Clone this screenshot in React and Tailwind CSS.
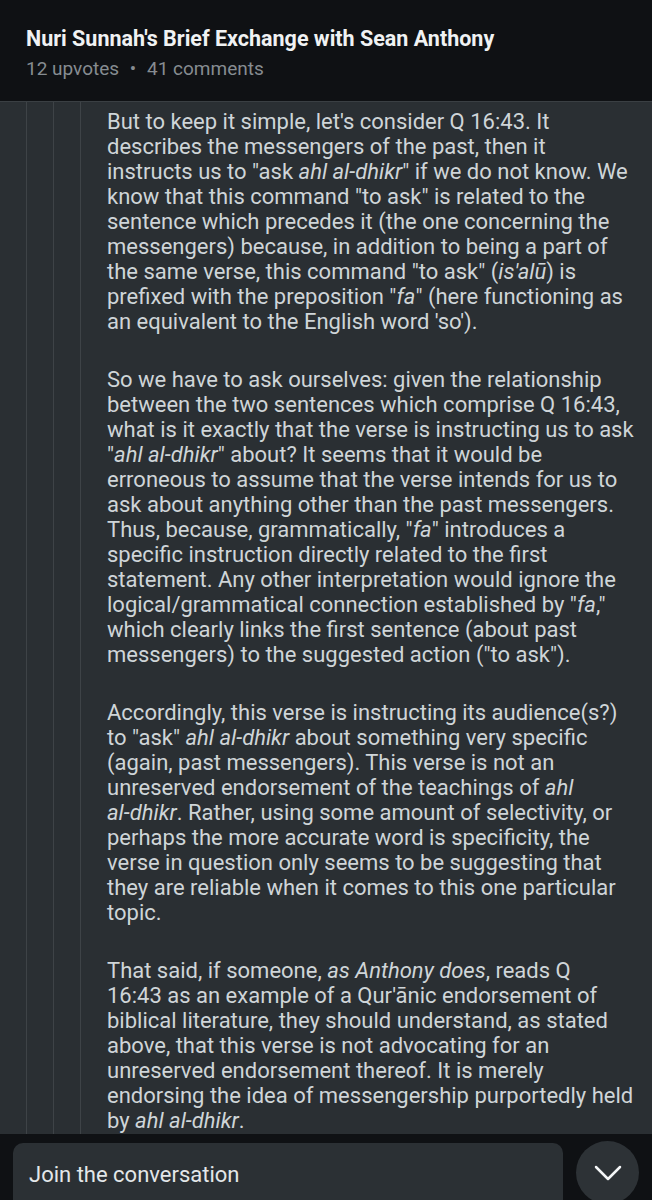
const paragraphs = [
  [
    <>But to keep it simple, let's consider Q 16:43. It</>,
    <>describes the messengers of the past, then it</>,
    <>
      instructs us to "ask <i>ahl al-dhikr</i>" if we do not know. We
    </>,
    <>know that this command "to ask" is related to the</>,
    <>sentence which precedes it (the one concerning the</>,
    <>messengers) because, in addition to being a part of</>,
    <>
      the same verse, this command "to ask" (<i>is'alū</i>) is
    </>,
    <>
      prefixed with the preposition "<i>fa</i>" (here functioning as
    </>,
    <>an equivalent to the English word 'so').</>,
  ],
  [
    <>So we have to ask ourselves: given the relationship</>,
    <>between the two sentences which comprise Q 16:43,</>,
    <>what is it exactly that the verse is instructing us to ask</>,
    <>
      "<i>ahl al-dhikr</i>" about? It seems that it would be
    </>,
    <>erroneous to assume that the verse intends for us to</>,
    <>ask about anything other than the past messengers.</>,
    <>
      Thus, because, grammatically, "<i>fa</i>" introduces a
    </>,
    <>specific instruction directly related to the first</>,
    <>statement. Any other interpretation would ignore the</>,
    <>
      logical/grammatical connection established by "<i>fa</i>,"
    </>,
    <>which clearly links the first sentence (about past</>,
    <>messengers) to the suggested action ("to ask").</>,
  ],
  [
    <>Accordingly, this verse is instructing its audience(s?)</>,
    <>
      to "ask" <i>ahl al-dhikr</i> about something very specific
    </>,
    <>(again, past messengers). This verse is not an</>,
    <>
      unreserved endorsement of the teachings of <i>ahl</i>
    </>,
    <>
      <i>al-dhikr</i>. Rather, using some amount of selectivity, or
    </>,
    <>perhaps the more accurate word is specificity, the</>,
    <>verse in question only seems to be suggesting that</>,
    <>they are reliable when it comes to this one particular</>,
    <>topic.</>,
  ],
  [
    <>
      That said, if someone, <i>as Anthony does</i>, reads Q
    </>,
    <>16:43 as an example of a Qur'ānic endorsement of</>,
    <>biblical literature, they should understand, as stated</>,
    <>above, that this verse is not advocating for an</>,
    <>unreserved endorsement thereof. It is merely</>,
    <>endorsing the idea of messengership purportedly held</>,
    <>
      by <i>ahl al-dhikr</i>.
    </>,
  ],
];

export default function App() {
  return (
    <div
      className="h-[1200px] w-[652px] flex flex-col overflow-hidden bg-[#2a2f33]"
      style={{ fontFamily: "Roboto, 'Noto Sans', sans-serif" }}
    >
      <header className="h-[102px] shrink-0 bg-[#0f1114] px-[26px] pt-[26px] border-b border-[#3a3f43]">
        <h1 className="text-[21.5px] leading-[26px] font-bold text-[#f0f2f3]">
          Nuri Sunnah's Brief Exchange with Sean Anthony
        </h1>
        <p className="mt-[6px] text-[19px] leading-[22px] text-[#868c91]">
          12 upvotes<span className="mx-[6px]"> • </span>41 comments
        </p>
      </header>

      <main className="flex-1 overflow-hidden flex">
        <div className="w-[26px] shrink-0" />
        <div className="w-[27px] shrink-0 border-l border-[#3e4347]" />
        <div className="w-[27px] shrink-0 border-l border-[#3e4347]" />
        <div className="flex-1 min-w-0 border-l border-[#3e4347] pl-[26px] pr-[13px] pt-[7px] text-[22px] leading-[25px] text-[#cfd5d8] space-y-[33px]">
          {paragraphs.map((lines, i) => (
            <p key={i} className="whitespace-nowrap">
              {lines.map((line, j) => (
                <span key={j} className="block">
                  {line}
                </span>
              ))}
            </p>
          ))}
        </div>
      </main>

      <footer className="h-[66px] shrink-0 bg-[#0f1114] flex items-start px-[13px] pt-[7px] gap-[13px] overflow-hidden">
        <div className="flex-1 mt-[2px] h-[70px] rounded-t-[10px] bg-[#2b3034] pl-[16px] pt-[19px] text-[22px] leading-[26px] text-[#e3e7e9]">
          Join the conversation
        </div>
        <button className="w-[63px] h-[63px] shrink-0 rounded-full bg-[#2d3236] flex items-center justify-center">
          <svg
            width="28"
            height="28"
            viewBox="0 0 28 28"
            fill="none"
            stroke="#f4f6f7"
            strokeWidth="2.5"
            strokeLinecap="round"
            strokeLinejoin="round"
          >
            <path d="M2 8l12 12 12-12" />
          </svg>
        </button>
      </footer>
    </div>
  );
}
